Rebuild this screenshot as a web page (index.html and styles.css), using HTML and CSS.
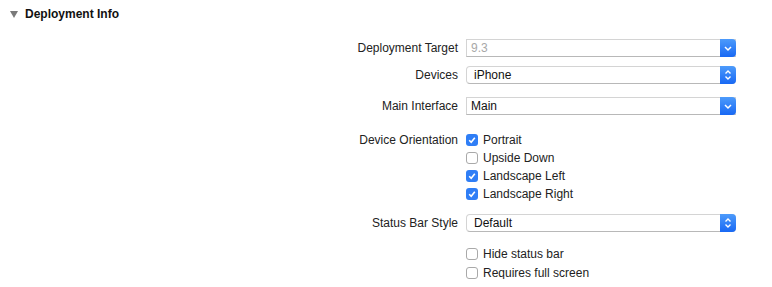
FILE: index.html
```html
<!DOCTYPE html>
<html lang="en">
<head>
  <meta charset="UTF-8" />
  <title>Deployment Info</title>
  <link rel="stylesheet" href="styles.css">
</head>
<body>
  <div class="section-head">
    <span class="disclosure"></span>
    <span class="section-title">Deployment Info</span>
  </div>

  <div class="form">
    <div class="row row-target">
      <div class="label">Deployment Target</div>
      <div class="combo">
        <span class="value muted">9.3</span>
        <span class="btn">
          <svg width="16" height="18" viewBox="0 0 16 18"><path d="M5 8 L8 11 L11 8" fill="none" stroke="#fff" stroke-width="1.5"/></svg>
        </span>
      </div>
    </div>

    <div class="row row-devices">
      <div class="label">Devices</div>
      <div class="popup">
        <span class="value">iPhone</span>
        <span class="btn">
          <svg width="16" height="18" viewBox="0 0 16 18"><path d="M5.5 7.5 L8 5 L10.5 7.5 M5.5 10.5 L8 13 L10.5 10.5" fill="none" stroke="#fff" stroke-width="1.4"/></svg>
        </span>
      </div>
    </div>

    <div class="row row-main">
      <div class="label">Main Interface</div>
      <div class="combo">
        <span class="value">Main</span>
        <span class="btn">
          <svg width="16" height="18" viewBox="0 0 16 18"><path d="M5 8 L8 11 L11 8" fill="none" stroke="#fff" stroke-width="1.5"/></svg>
        </span>
      </div>
    </div>

    <div class="row row-orient">
      <div class="label">Device Orientation</div>
      <div class="checks">
        <div class="check on"><span class="box"><svg width="12" height="12" viewBox="0 0 12 12"><path d="M3.2 6.2 L5.2 8.2 L8.8 3.8" fill="none" stroke="#fff" stroke-width="1.6"/></svg></span>Portrait</div>
        <div class="check"><span class="box"></span>Upside Down</div>
        <div class="check on"><span class="box"><svg width="12" height="12" viewBox="0 0 12 12"><path d="M3.2 6.2 L5.2 8.2 L8.8 3.8" fill="none" stroke="#fff" stroke-width="1.6"/></svg></span>Landscape Left</div>
        <div class="check on"><span class="box"><svg width="12" height="12" viewBox="0 0 12 12"><path d="M3.2 6.2 L5.2 8.2 L8.8 3.8" fill="none" stroke="#fff" stroke-width="1.6"/></svg></span>Landscape Right</div>
      </div>
    </div>

    <div class="row row-status">
      <div class="label">Status Bar Style</div>
      <div class="popup">
        <span class="value">Default</span>
        <span class="btn">
          <svg width="16" height="18" viewBox="0 0 16 18"><path d="M5.5 7.5 L8 5 L10.5 7.5 M5.5 10.5 L8 13 L10.5 10.5" fill="none" stroke="#fff" stroke-width="1.4"/></svg>
        </span>
      </div>
    </div>

    <div class="row row-extra">
      <div class="label"></div>
      <div class="checks loose">
        <div class="check"><span class="box"></span>Hide status bar</div>
        <div class="check"><span class="box"></span>Requires full screen</div>
      </div>
    </div>
  </div>
</body>
</html>
```

FILE: styles.css
```css
body {
  margin: 0;
  background: #fff;
  font-family: "Liberation Sans", Arial, sans-serif;
  font-size: 12px;
  color: #222;
}

.section-head {
  display: flex;
  align-items: center;
  height: 28px;
  padding-left: 10px;
}
.disclosure {
  width: 0;
  height: 0;
  border-left: 4px solid transparent;
  border-right: 4px solid transparent;
  border-top: 7px solid #7a7a7a;
  margin-right: 7px;
}
.section-title {
  font-weight: bold;
  font-size: 12px;
  color: #111;
}

.form {
  padding-top: 11px;
}
.row {
  display: flex;
  align-items: flex-start;
}
.label {
  width: 466px;
  text-align: right;
  padding-right: 8px;
  box-sizing: border-box;
  line-height: 18px;
  flex-shrink: 0;
}

.row-devices { margin-top: 9px; }
.row-main { margin-top: 13px; }
.row-orient { margin-top: 19px; }
.row-orient .label { line-height: 12px; }
.row-status { margin-top: 14px; }
.row-extra { margin-top: 16px; }

.combo, .popup {
  position: relative;
  width: 270px;
  height: 18px;
  box-sizing: border-box;
  background: #fff;
  border: 1px solid #d4d4d4;
  border-bottom-color: #b8b8b8;
  display: flex;
  align-items: center;
}
.popup {
  border-radius: 4px;
}
.value {
  flex: 1;
  padding-left: 7px;
  color: #111;
}
.combo .value {
  padding-left: 4px;
}
.value.muted {
  color: #a8a8a8;
}
.btn {
  position: absolute;
  right: -1px;
  top: -1px;
  width: 16px;
  height: 18px;
  border-radius: 0 4px 4px 0;
  background: linear-gradient(#4d9bfb, #1868f4);
}
.btn svg {
  display: block;
}

.checks {
  display: flex;
  flex-direction: column;
  gap: 6px;
}
.checks.loose {
  gap: 7px;
}
.check {
  display: flex;
  align-items: center;
  height: 12px;
  line-height: 12px;
}
.box {
  width: 12px;
  height: 12px;
  box-sizing: border-box;
  border: 1px solid #a9a9a9;
  border-radius: 3px;
  background: #fff;
  margin-right: 5px;
}
.box svg {
  display: block;
  margin: -1px;
}
.check.on .box {
  border: none;
  background: #2f7ef6;
}
.check.on .box svg {
  margin: 0;
}
```
